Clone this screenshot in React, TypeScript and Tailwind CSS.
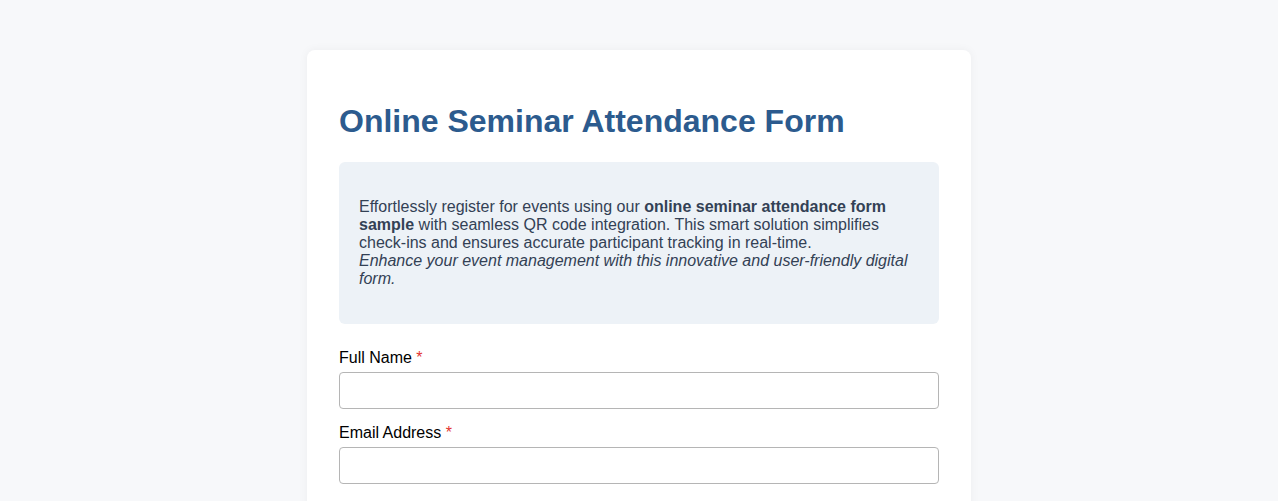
export default function App() {
  return (
    <div className="min-h-screen bg-[#f7f8fa] pt-[50px] font-['Liberation_Sans',Arial,sans-serif]">
      <div className="mx-auto w-[664px] rounded-lg bg-white px-8 pt-8 pb-8 shadow-[0_0_10px_rgba(0,0,0,0.05)]">
        <h1 className="mt-[21px] mb-[22px] text-[32px] font-bold leading-[37px] text-[#2c5b8e]">
          Online Seminar Attendance Form
        </h1>
        <div className="rounded-md bg-[#edf2f7] px-5 py-5 text-base leading-[18px] text-[#334155]">
          <p className="my-4">
            Effortlessly register for events using our{" "}
            <strong className="font-bold">online seminar attendance form sample</strong> with seamless QR code
            integration. This smart solution simplifies check-ins and ensures accurate participant tracking in
            real-time.
            <br />
            <em>Enhance your event management with this innovative and user-friendly digital form.</em>
          </p>
        </div>
        <form className="mt-[25px]">
          <div className="mb-[15px]">
            <label className="mb-[5px] block text-base leading-[18px] text-black">
              Full Name <span className="text-[#e3342f]">*</span>
            </label>
            <input
              type="text"
              className="block h-[37px] w-full rounded border border-[#b5b5b5] bg-white px-2 text-base outline-none"
            />
          </div>
          <div className="mb-[15px]">
            <label className="mb-[5px] block text-base leading-[18px] text-black">
              Email Address <span className="text-[#e3342f]">*</span>
            </label>
            <input
              type="email"
              className="block h-[37px] w-full rounded border border-[#b5b5b5] bg-white px-2 text-base outline-none"
            />
          </div>
        </form>
      </div>
    </div>
  );
}
